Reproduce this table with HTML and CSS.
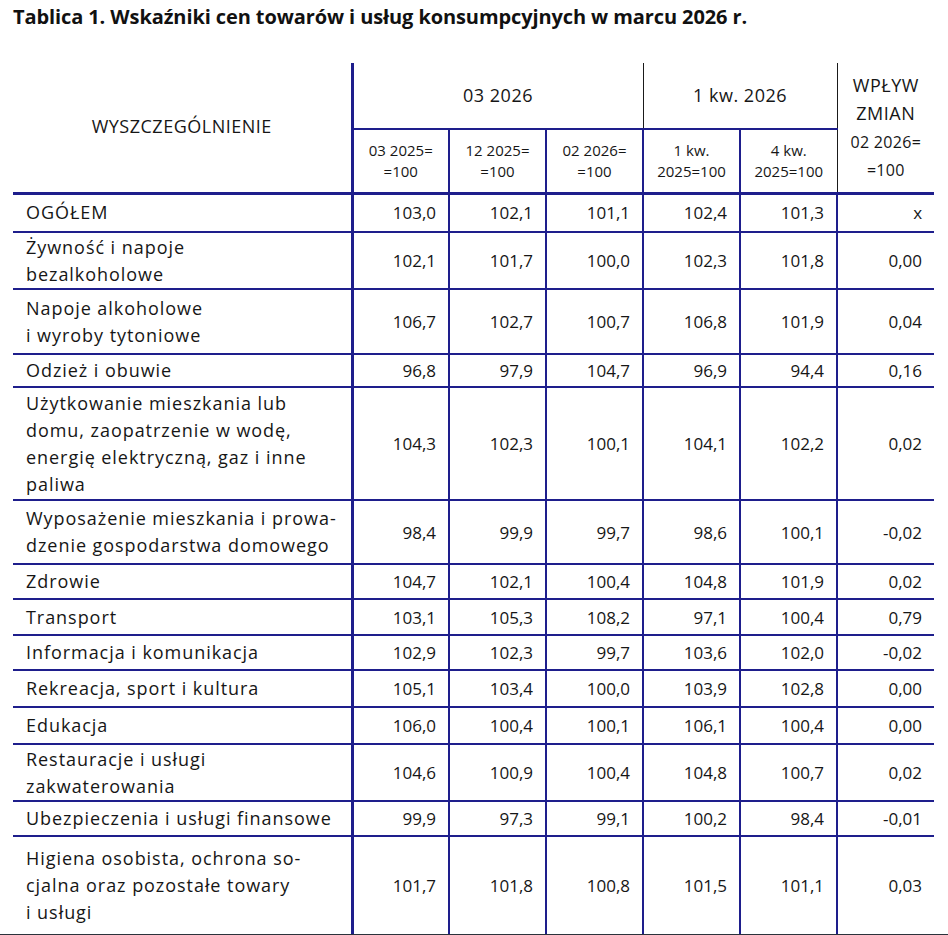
FILE: index.html
```html
<!DOCTYPE html>
<html lang="pl">
<head>
<meta charset="utf-8">
<title>Tablica 1</title>
<link rel="stylesheet" href="styles.css">
</head>
<body>
<h1 class="title">Tablica 1. Wskaźniki cen towarów i usług konsumpcyjnych w marcu 2026 r.</h1>
<table class="tbl">
  <colgroup>
    <col class="c-name"><col class="c-num"><col class="c-num"><col class="c-num"><col class="c-num"><col class="c-num"><col class="c-num">
  </colgroup>
  <thead>
    <tr class="h1">
      <th rowspan="2" class="name-h">WYSZCZEGÓLNIENIE</th>
      <th colspan="3" class="grp">03 2026</th>
      <th colspan="2" class="grp thin-l">1 kw. 2026</th>
      <th rowspan="2" class="wplyw thin-l">WPŁYW<br>ZMIAN<br><span class="sub">02 2026=<br>=100</span></th>
    </tr>
    <tr class="h2">
      <th class="sub">03 2025=<br>=100</th>
      <th class="sub">12 2025=<br>=100</th>
      <th class="sub">02 2026=<br>=100</th>
      <th class="sub">1 kw.<br>2025=100</th>
      <th class="sub">4 kw.<br>2025=100</th>
    </tr>
  </thead>
  <tbody>
    <tr><td>OGÓŁEM</td><td>103,0</td><td>102,1</td><td>101,1</td><td>102,4</td><td>101,3</td><td>x</td></tr>
    <tr><td>Żywność i napoje<br>bezalkoholowe</td><td>102,1</td><td>101,7</td><td>100,0</td><td>102,3</td><td>101,8</td><td>0,00</td></tr>
    <tr><td>Napoje alkoholowe<br>i wyroby tytoniowe</td><td>106,7</td><td>102,7</td><td>100,7</td><td>106,8</td><td>101,9</td><td>0,04</td></tr>
    <tr><td>Odzież i obuwie</td><td>96,8</td><td>97,9</td><td>104,7</td><td>96,9</td><td>94,4</td><td>0,16</td></tr>
    <tr><td>Użytkowanie mieszkania lub<br>domu, zaopatrzenie w wodę,<br>energię elektryczną, gaz i inne<br>paliwa</td><td>104,3</td><td>102,3</td><td>100,1</td><td>104,1</td><td>102,2</td><td>0,02</td></tr>
    <tr><td>Wyposażenie mieszkania i prowa-<br>dzenie gospodarstwa domowego</td><td>98,4</td><td>99,9</td><td>99,7</td><td>98,6</td><td>100,1</td><td>-0,02</td></tr>
    <tr><td>Zdrowie</td><td>104,7</td><td>102,1</td><td>100,4</td><td>104,8</td><td>101,9</td><td>0,02</td></tr>
    <tr><td>Transport</td><td>103,1</td><td>105,3</td><td>108,2</td><td>97,1</td><td>100,4</td><td>0,79</td></tr>
    <tr><td>Informacja i komunikacja</td><td>102,9</td><td>102,3</td><td>99,7</td><td>103,6</td><td>102,0</td><td>-0,02</td></tr>
    <tr><td>Rekreacja, sport i kultura</td><td>105,1</td><td>103,4</td><td>100,0</td><td>103,9</td><td>102,8</td><td>0,00</td></tr>
    <tr><td>Edukacja</td><td>106,0</td><td>100,4</td><td>100,1</td><td>106,1</td><td>100,4</td><td>0,00</td></tr>
    <tr><td>Restauracje i usługi<br>zakwaterowania</td><td>104,6</td><td>100,9</td><td>100,4</td><td>104,8</td><td>100,7</td><td>0,02</td></tr>
    <tr><td>Ubezpieczenia i usługi finansowe</td><td>99,9</td><td>97,3</td><td>99,1</td><td>100,2</td><td>98,4</td><td>-0,01</td></tr>
    <tr><td>Higiena osobista, ochrona so-<br>cjalna oraz pozostałe towary<br>i usługi</td><td>101,7</td><td>101,8</td><td>100,8</td><td>101,5</td><td>101,1</td><td>0,03</td></tr>
  </tbody>
</table>
<div class="bottom-bar"></div>
</body>
</html>
```

FILE: styles.css
```css
html, body {
  margin: 0;
  padding: 0;
  background: #ffffff;
}
body {
  width: 948px;
  height: 935px;
  overflow: hidden;
  font-family: "Open Sans", "Noto Sans", sans-serif;
  color: #161616;
}
.title {
  margin: 0;
  padding: 4px 0 0 13px;
  height: 63px;
  box-sizing: border-box;
  font-size: 20px;
  line-height: 26px;
  font-weight: 700;
  letter-spacing: -0.1px;
  color: #111111;
}
.tbl {
  margin-left: 13px;
  width: 921px;
  border-collapse: collapse;
  table-layout: fixed;
  font-size: 17px;
  line-height: 27px;
}
.c-name { width: 339px; }
.c-num { width: 97px; }

.tbl th {
  font-weight: 400;
  font-size: 18px;
  letter-spacing: 0.5px;
  text-align: center;
  vertical-align: middle;
  padding: 0;
}
.tbl thead tr.h1 { height: 66px; }
.tbl thead tr.h2 { height: 64px; }
.tbl th.name-h {
  border-right: 3px solid #1e1e8c;
  border-bottom: 3px solid #1e1e8c;
  padding-bottom: 2px;
}
.tbl th.grp {
  border-bottom: 2px solid #1e1e8c;
}
.tbl th.thin-l {
  border-left: 1px solid #1a1a1a;
}
.tbl th.wplyw {
  border-bottom: 3px solid #1e1e8c;
  line-height: 28px;
}
.tbl th.wplyw .sub {
  font-size: 16px;
  letter-spacing: 0.3px;
  line-height: 26px;
}
.tbl th.sub {
  font-size: 15px;
  letter-spacing: 0;
  line-height: 21px;
  border-left: 2px solid #1e1e8c;
  border-bottom: 3px solid #1e1e8c;
}
.tbl th.sub:first-child {
  border-left: 3px solid #1e1e8c;
}

.tbl td {
  padding: 0 12px 0 13px;
  text-align: right;
  vertical-align: middle;
  white-space: nowrap;
  border-left: 2px solid #1e1e8c;
  border-bottom: 2px solid #1e1e8c;
}
.tbl td:first-child {
  text-align: left;
  font-size: 18px;
  letter-spacing: 0.95px;
  border-left: none;
  border-right: 3px solid #1e1e8c;
}
.tbl tbody tr:last-child td {
  border-bottom: none;
}

.tbl tbody tr:nth-child(1) { height: 39px; }
.tbl tbody tr:nth-child(2) { height: 57px; }
.tbl tbody tr:nth-child(3) { height: 65px; }
.tbl tbody tr:nth-child(4) { height: 33px; }
.tbl tbody tr:nth-child(5) { height: 113px; }
.tbl tbody tr:nth-child(6) { height: 64px; }
.tbl tbody tr:nth-child(7) { height: 35px; }
.tbl tbody tr:nth-child(8) { height: 36px; }
.tbl tbody tr:nth-child(9) { height: 35px; }
.tbl tbody tr:nth-child(10) { height: 37px; }
.tbl tbody tr:nth-child(11) { height: 37px; }
.tbl tbody tr:nth-child(12) { height: 57px; }
.tbl tbody tr:nth-child(13) { height: 35px; }
.tbl tbody tr:nth-child(14) { height: 98px; }

.bottom-bar {
  height: 4px;
  background: #2b323b;
}
```
